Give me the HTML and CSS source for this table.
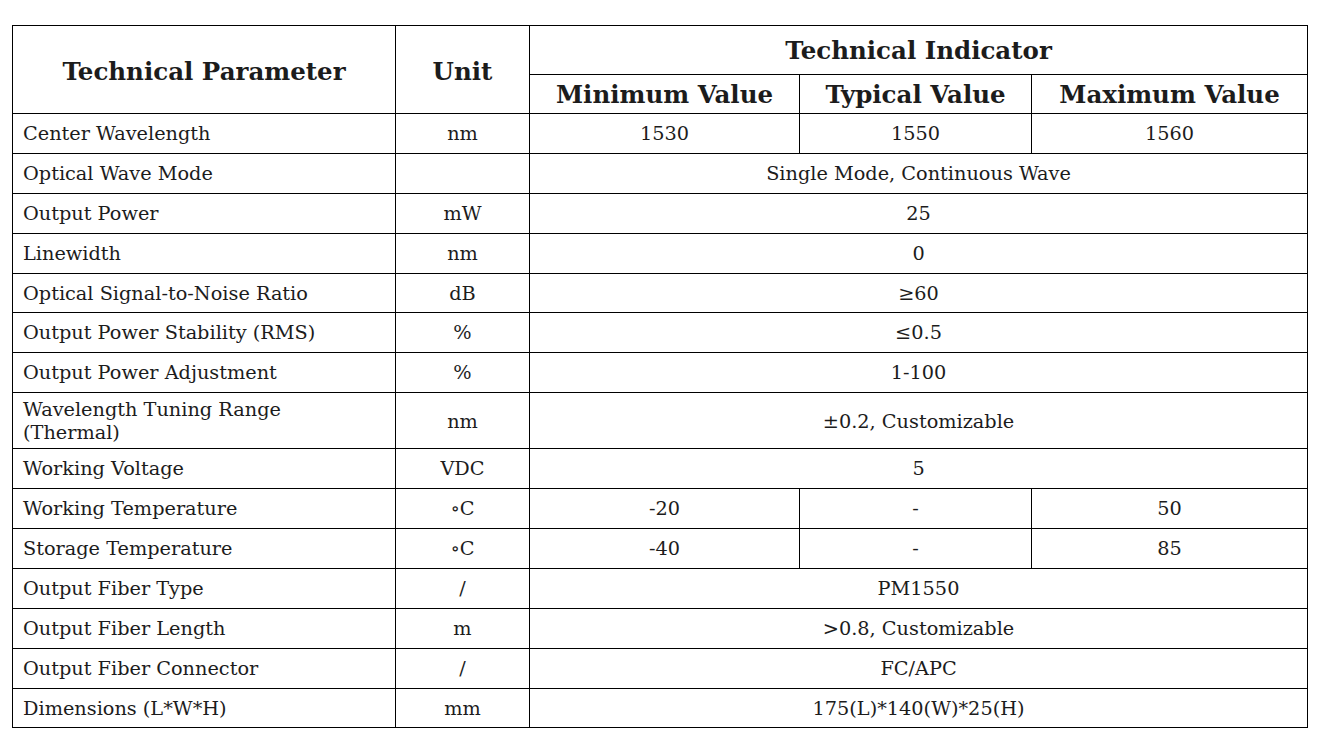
FILE: index.html
```html
<!DOCTYPE html>
<html>
<head>
<meta charset="utf-8">
<link rel="stylesheet" href="styles.css">
</head>
<body>
<table class="spec">
  <colgroup>
    <col class="c-param"><col class="c-unit"><col class="c-min"><col class="c-typ"><col class="c-max">
  </colgroup>
  <thead>
    <tr class="h1">
      <th rowspan="2" class="main">Technical Parameter</th>
      <th rowspan="2" class="main">Unit</th>
      <th colspan="3">Technical Indicator</th>
    </tr>
    <tr class="h2">
      <th>Minimum Value</th>
      <th>Typical Value</th>
      <th>Maximum Value</th>
    </tr>
  </thead>
  <tbody>
    <tr><td>Center Wavelength</td><td>nm</td><td>1530</td><td>1550</td><td>1560</td></tr>
    <tr><td>Optical Wave Mode</td><td></td><td colspan="3">Single Mode, Continuous Wave</td></tr>
    <tr><td>Output Power</td><td>mW</td><td colspan="3">25</td></tr>
    <tr><td>Linewidth</td><td>nm</td><td colspan="3">0</td></tr>
    <tr><td>Optical Signal-to-Noise Ratio</td><td>dB</td><td colspan="3">≥60</td></tr>
    <tr><td>Output Power Stability (RMS)</td><td>%</td><td colspan="3">≤0.5</td></tr>
    <tr><td>Output Power Adjustment</td><td>%</td><td colspan="3">1-100</td></tr>
    <tr class="tall"><td>Wavelength Tuning Range<br>(Thermal)</td><td>nm</td><td colspan="3">±0.2, Customizable</td></tr>
    <tr><td>Working Voltage</td><td>VDC</td><td colspan="3">5</td></tr>
    <tr><td>Working Temperature</td><td>∘C</td><td>-20</td><td>-</td><td>50</td></tr>
    <tr><td>Storage Temperature</td><td>∘C</td><td>-40</td><td>-</td><td>85</td></tr>
    <tr><td>Output Fiber Type</td><td>/</td><td colspan="3">PM1550</td></tr>
    <tr><td>Output Fiber Length</td><td>m</td><td colspan="3">&gt;0.8, Customizable</td></tr>
    <tr><td>Output Fiber Connector</td><td>/</td><td colspan="3">FC/APC</td></tr>
    <tr><td>Dimensions (L*W*H)</td><td>mm</td><td colspan="3">175(L)*140(W)*25(H)</td></tr>
  </tbody>
</table>
</body>
</html>
```
FILE: styles.css
```css
html, body {
  margin: 0;
  padding: 0;
  background: #ffffff;
}
body {
  padding: 25px 0 0 12px;
  font-family: "DejaVu Serif", "Liberation Serif", serif;
  color: #1c1c1c;
}
.spec {
  border-collapse: collapse;
  table-layout: fixed;
  width: 1295px;
}
.c-param { width: 383px; }
.c-unit { width: 134px; }
.c-min { width: 270px; }
.c-typ { width: 232px; }
.c-max { width: 276px; }
.spec th, .spec td {
  border: 1px solid #000;
  padding: 0 10px;
  text-align: center;
  vertical-align: middle;
  line-height: 24px;
}
.spec th {
  font-weight: bold;
  font-size: 24.5px;
  padding: 0 4px;
}
.spec td {
  font-size: 19.3px;
  height: 37.9px;
  padding-top: 1px;
}
.spec td:first-child {
  text-align: left;
}
.spec .h2 th { height: 37px; padding-top: 1px; }
.spec .h1 th:nth-child(3) { padding-top: 2px; height: 46px; }
.spec .h1 th.main { padding-top: 4px; }
.spec .tall td { height: 54px; line-height: 23px; }
```
